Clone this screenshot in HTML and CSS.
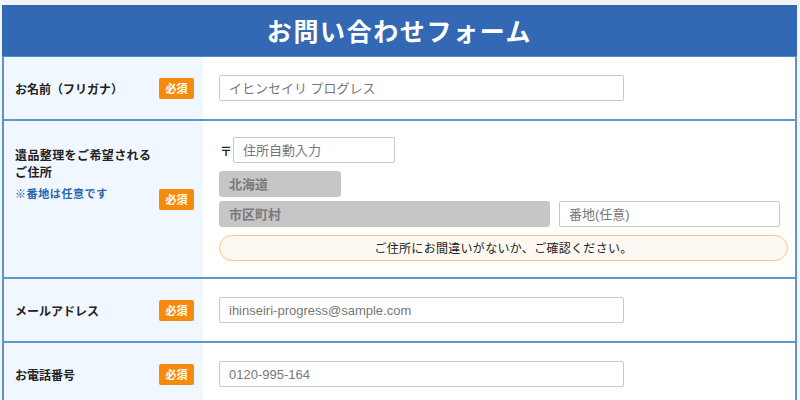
FILE: index.html
```html
<!DOCTYPE html>
<html lang="ja">
<head>
<meta charset="utf-8">
<title>お問い合わせフォーム</title>
<link rel="stylesheet" href="styles.css">
</head>
<body>
<div class="page">
  <h1 class="header">お問い合わせフォーム</h1>
  <div class="table">
    <div class="row">
      <div class="label">
        <span class="label-text">お名前（フリガナ）</span>
        <span class="badge">必須</span>
      </div>
      <div class="field">
        <input class="input input-wide" type="text" placeholder="イヒンセイリ プログレス">
      </div>
    </div>
    <div class="row">
      <div class="label">
        <div class="label-block">
          <div class="label-text lines">遺品整理をご希望される<br>ご住所</div>
          <div class="note">※番地は任意です</div>
        </div>
        <span class="badge">必須</span>
      </div>
      <div class="field address">
        <div class="postal">
          <span class="postal-mark">〒</span>
          <input class="input input-postal" type="text" placeholder="住所自動入力">
        </div>
        <div class="select select-pref">北海道</div>
        <div class="city-line">
          <div class="select select-city">市区町村</div>
          <input class="input input-street" type="text" placeholder="番地(任意)">
        </div>
        <div class="notice">ご住所にお間違いがないか、ご確認ください。</div>
      </div>
    </div>
    <div class="row">
      <div class="label">
        <span class="label-text">メールアドレス</span>
        <span class="badge">必須</span>
      </div>
      <div class="field">
        <input class="input input-wide" type="text" placeholder="ihinseiri-progress@sample.com">
      </div>
    </div>
    <div class="row">
      <div class="label">
        <span class="label-text">お電話番号</span>
        <span class="badge">必須</span>
      </div>
      <div class="field">
        <input class="input input-wide" type="text" placeholder="0120-995-164">
      </div>
    </div>
  </div>
</div>
</body>
</html>
```

FILE: styles.css
```css
* {
  box-sizing: border-box;
}

html, body {
  margin: 0;
  padding: 0;
  background: #f4f4f4;
  font-family: "Noto Sans CJK JP", "Noto Sans", sans-serif;
  color: #222;
}

.page {
  padding: 5px 3px 0 2px;
}

.header {
  margin: 0;
  height: 51px;
  background: #3369b4;
  color: #fff;
  font-size: 25px;
  font-weight: bold;
  letter-spacing: 1.6px;
  line-height: 51px;
  text-align: center;
}

.table {
  border-top: 1px solid #4f8ec4;
  border-left: 2px solid #5b98c7;
  border-right: 2px solid #5b98c7;
  background: #fff;
}

.row {
  display: grid;
  grid-template-columns: 199px 1fr;
  border-bottom: 2px solid #5b98c7;
}

.label {
  background: #f0f7ff;
  display: flex;
  align-items: center;
  justify-content: space-between;
  padding: 0 9px 0 11px;
}

.label-text {
  font-size: 12px;
  font-weight: bold;
  color: #222;
}

.label-block {
  align-self: flex-start;
  margin-top: 25px;
}

.lines {
  line-height: 17px;
  letter-spacing: 0.4px;
}

.note {
  margin-top: 5px;
  font-size: 11px;
  font-weight: bold;
  color: #2b62b0;
  letter-spacing: 0.6px;
}

.badge {
  width: 35px;
  height: 21px;
  background: #f68a0c;
  color: #fff;
  font-size: 11px;
  font-weight: bold;
  line-height: 21px;
  text-align: center;
  border-radius: 2px;
}

.field {
  padding: 18px 7px 18px 16px;
  background: #fff;
}

.input {
  display: block;
  height: 26px;
  border: 1px solid #c8c8c8;
  border-radius: 2px;
  background: #fff;
  padding: 0 9px;
  font-family: "Liberation Sans", "Noto Sans CJK JP", sans-serif;
  font-size: 13px;
  color: #333;
  outline: none;
}

.input::placeholder {
  color: #777;
}

.input-wide {
  width: 405px;
}

.address {
  padding-top: 16px;
  padding-bottom: 16px;
  display: flex;
  flex-direction: column;
  align-items: flex-start;
}

.postal {
  display: flex;
  align-items: center;
}

.postal-mark {
  width: 14px;
  padding-left: 1px;
  font-size: 12px;
  font-weight: bold;
  color: #222;
}

.input-postal {
  width: 162px;
}

.select {
  height: 26px;
  background: #c6c6c6;
  border-radius: 3px;
  color: #7a7a7a;
  font-size: 13px;
  font-weight: bold;
  line-height: 26px;
  padding-left: 10px;
}

.select-pref {
  width: 122px;
  margin-top: 8px;
}

.city-line {
  display: flex;
  gap: 9px;
  margin-top: 4px;
}

.select-city {
  width: 331px;
}

.input-street {
  width: 221px;
}

.notice {
  margin-top: 8px;
  width: 569px;
  height: 26px;
  border: 1px solid #f3c583;
  border-radius: 13px;
  background: #fdf8f1;
  font-size: 12px;
  letter-spacing: 0.3px;
  line-height: 24px;
  text-align: center;
  color: #222;
}
```
